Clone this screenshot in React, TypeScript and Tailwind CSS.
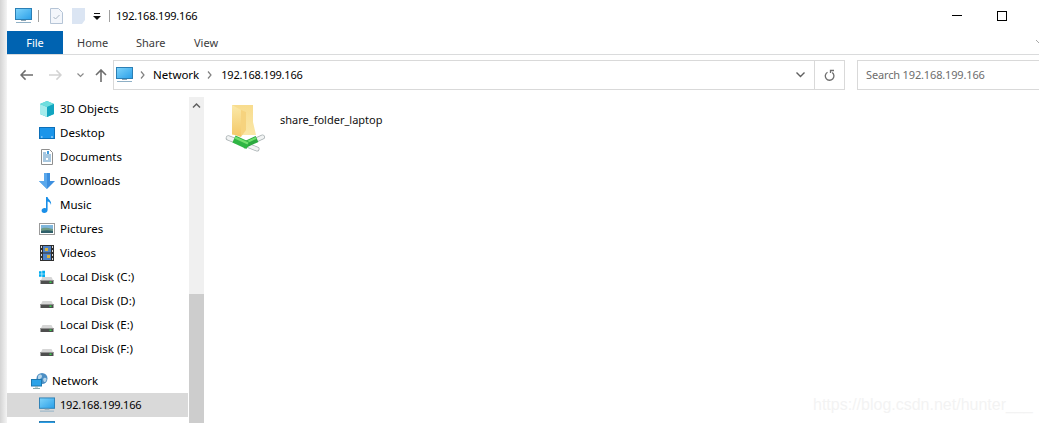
import React from "react";

const Monitor = ({ w = 17 }: { w?: number }) => (
  <svg width={w} height={16} viewBox="0 0 17 16" className="shrink-0">
    <defs>
      <linearGradient id="scr" x1="0" y1="0" x2="1" y2="1">
        <stop offset="0" stopColor="#7fd4fb" />
        <stop offset="1" stopColor="#2a9fe8" />
      </linearGradient>
    </defs>
    <rect x="0.5" y="0.5" width="16" height="11" fill="url(#scr)" stroke="#2b7fb5" />
    <rect x="6" y="12" width="5" height="1" fill="#8fa6b5" />
    <rect x="1" y="14" width="15" height="1" fill="#8fb0c6" />
  </svg>
);

const Cube = () => (
  <svg width="16" height="16" viewBox="0 0 16 16">
    <path d="M8 0l7 3v10l-7 3-7-3V3z" fill="#2fc4cf" />
    <path d="M1 3l7 3v10l-7-3z" fill="#a5ecec" />
    <path d="M8 0l7 3-7 3-7-3z" fill="#6fdede" />
    <path d="M8 6l7-3v10l-7 3z" fill="#12a5c0" />
  </svg>
);
const Desktop = () => (
  <svg width="16" height="16" viewBox="0 0 16 16">
    <rect x="0.5" y="2.5" width="15" height="11" fill="#1b95ea" stroke="#0d6fb8" />
    <rect x="2" y="11.5" width="1.500" height="1" fill="#cfeaff" />
    <rect x="12" y="11.5" width="2" height="1" fill="#cfeaff" />
  </svg>
);
const Docs = () => (
  <svg width="16" height="16" viewBox="0 0 16 16">
    <path d="M2.500 0.500h8l3 3v12h-11z" fill="#fff" stroke="#8f8f8f" />
    <path d="M4 4h3M4 6h8M4 8h8M4 10h3M9 10h3M4 12h8" stroke="#4f8fc0" strokeWidth="1" />
    <path d="M8 2h2v3H8z" fill="#3f9adb" />
  </svg>
);
const Download = () => (
  <svg width="16" height="16" viewBox="0 0 16 16">
    <path d="M5 0h6v8h5l-8 8-8-8h5z" fill="#3d8fdf" />
    <path d="M5 0h3v16l-8-8h5z" fill="#5aa8ec" />
  </svg>
);
const Music = () => (
  <svg width="16" height="16" viewBox="0 0 16 16">
    <path d="M7 0h1.600c.4 2.500 4.400 3.500 3.400 8-.4-2-2-3.200-3.400-3.400V13c0 1.800-1.600 3-3.400 3S2.600 15 2.600 13.500 4 11 5.500 11c.6 0 1.100.1 1.500.4z" fill="#1a8fe8" />
  </svg>
);
const Pictures = () => (
  <svg width="16" height="16" viewBox="0 0 16 16">
    <rect x="0.5" y="2.500" width="15" height="11" fill="#fff" stroke="#9a9a9a" />
    <rect x="2" y="4" width="12" height="4" fill="#7fb6dc" />
    <path d="M2 8c3-2 6-1 12 0v4H2z" fill="#6f9a84" />
    <path d="M2 10c4-1 8-1 12 0v2H2z" fill="#2f5f6a" />
  </svg>
);
const Videos = () => (
  <svg width="16" height="16" viewBox="0 0 16 16">
    <rect x="1" y="0" width="14" height="16" fill="#2f2f2f" />
    <rect x="4" y="1" width="8" height="6.500" fill="#4f83c8" />
    <rect x="4" y="8.500" width="8" height="6.500" fill="#4f83c8" />
    <path d="M6 3h3v3H6zM8 10h3v3H8z" fill="#d9b23c" />
    <path d="M2 1h1v2H2zM2 5h1v2H2zM2 9h1v2H2zM2 13h1v2H2zM13 1h1v2h-1zM13 5h1v2h-1zM13 9h1v2h-1zM13 13h1v2h-1z" fill="#ddd" />
  </svg>
);
const Disk = ({ win = false }: { win?: boolean }) => (
  <svg width="16" height="16" viewBox="0 0 16 16">
    {win && <path d="M0 2.300h2.600v2.500H0zM3.200 1.700H6v3H3.200zM0 5.300h2.600v2.500H0zM3.200 5.300H6v3H3.200z" fill="#00adef" />}
    <path d="M3.500 8h9l1.500 3H2z" fill="#d6d6d6" />
    <rect x="1.500" y="11" width="13" height="4" fill="#4e4e4e" />
    <rect x="1.500" y="11" width="13" height="1" fill="#909090" />
    <rect x="10.500" y="12.500" width="2" height="1.500" fill="#35d04a" />
  </svg>
);
const NetworkIcon = () => (
  <svg width="18" height="16" viewBox="0 0 18 16">
    <circle cx="11" cy="5.500" r="5.500" fill="#4d8fc4" />
    <path d="M8 2c2-1 3 0 3 1.500S9 5 9 7s-2 0-2-2 0-2.500 1-3zM13 5c1.500-.5 3 0 2.500 2S13 10 12.500 8s-.5-2.500.5-3z" fill="#b8d6ea" />
    <rect x="0.500" y="6.500" width="10" height="6.500" fill="#2aa3e8" stroke="#1c78b0" />
    <rect x="4" y="13.500" width="3" height="1" fill="#8aa" />
    <rect x="2" y="15" width="7" height="1" fill="#8aa" />
  </svg>
);

const FolderShare = () => (
  <svg width="44" height="56" viewBox="0 0 44 56" className="shrink-0">
    <defs>
      <linearGradient id="foldBack" x1="0" y1="0" x2="0" y2="1">
        <stop offset="0" stopColor="#f8dc8e" />
        <stop offset="1" stopColor="#fae7a8" />
      </linearGradient>
      <linearGradient id="foldFront" x1="0" y1="0" x2="0" y2="1">
        <stop offset="0" stopColor="#fbe9a9" />
        <stop offset="1" stopColor="#f3c766" />
      </linearGradient>
    </defs>
    <path d="M8 5H29V22L32 35H8z" fill="url(#foldBack)" />
    <path d="M8 5L17 10V37L8 34z" fill="url(#foldFront)" />
    <path d="M17 10L22 12V30L17 37z" fill="#f6d37e" />
    {/* pipe ends */}
    <line x1="4.500" y1="38" x2="11" y2="40.500" stroke="#aab2b4" strokeWidth="5.500" strokeLinecap="round" />
    <line x1="4.500" y1="38" x2="11" y2="40.500" stroke="#f1f3f3" strokeWidth="3.800" strokeLinecap="round" />
    <line x1="32" y1="40" x2="38.500" y2="37" stroke="#aab2b4" strokeWidth="5" strokeLinecap="round" />
    <line x1="32" y1="40" x2="38.500" y2="37" stroke="#f1f3f3" strokeWidth="3.400" strokeLinecap="round" />
    <line x1="24" y1="45.500" x2="33" y2="49" stroke="#aab2b4" strokeWidth="5" strokeLinecap="round" />
    <line x1="24" y1="45.500" x2="33" y2="49" stroke="#f1f3f3" strokeWidth="3.400" strokeLinecap="round" />
    {/* green pipes */}
    <line x1="19" y1="45.500" x2="33" y2="39" stroke="#2aa83e" strokeWidth="6.500" />
    <line x1="20" y1="43.500" x2="32" y2="38" stroke="#6fe06c" strokeWidth="2" />
    <line x1="10" y1="39" x2="24" y2="45.500" stroke="#2fb544" strokeWidth="7.500" />
    <line x1="11" y1="37.500" x2="24" y2="43.500" stroke="#74e070" strokeWidth="2.200" />
  </svg>
);

const rows: { label: string; icon: React.ReactNode }[] = [
  { label: "3D Objects", icon: <Cube /> },
  { label: "Desktop", icon: <Desktop /> },
  { label: "Documents", icon: <Docs /> },
  { label: "Downloads", icon: <Download /> },
  { label: "Music", icon: <Music /> },
  { label: "Pictures", icon: <Pictures /> },
  { label: "Videos", icon: <Videos /> },
  { label: "Local Disk (C:)", icon: <Disk win /> },
  { label: "Local Disk (D:)", icon: <Disk /> },
  { label: "Local Disk (E:)", icon: <Disk /> },
  { label: "Local Disk (F:)", icon: <Disk /> },
];

const Row = ({ label, icon }: { label: string; icon: React.ReactNode }) => (
  <div className="flex h-6 shrink-0 items-center pl-[32px]">
    <span className="flex w-4 justify-center">{icon}</span>
    <span className="ml-[5px] text-black">{label}</span>
  </div>
);

const Ip = "192.168.199.166";
const ipClass = "text-[11px] tracking-[-0.2px]";

export default function App() {
  return (
    <div className="relative flex h-[423px] w-[1039px] overflow-hidden bg-white text-[11.5px] leading-4 text-black [font-family:'Noto_Sans','Open_Sans',sans-serif]">
      <div className="w-[7px] shrink-0 bg-gradient-to-r from-[#d4d4d4] to-[#f4f4f4]" />
      <div className="flex min-w-0 flex-1 flex-col">
        {/* Title bar */}
        <div className="flex h-[31px] shrink-0 items-center">
          <span className="ml-[8px] flex"><Monitor /></span>
          <span className="ml-[6px] h-[12px] w-px bg-[#a0a0a0]" />
          <svg width="13" height="16" viewBox="0 0 13 16" className="ml-[11px]">
            <path d="M0.500 0.500h8l4 4v11H0.500z" fill="#f3f6fb" stroke="#b5c4d6" />
            <path d="M3.500 9l2 2 4-4" fill="none" stroke="#a9b6c4" />
          </svg>
          <svg width="13" height="16" viewBox="0 0 13 16" className="ml-[9px]">
            <path d="M0 0h13v12l-3 4H0z" fill="#dbe5f3" />
          </svg>
          <svg width="8" height="8" viewBox="0 0 8 8" className="ml-[8px] mt-[2px]">
            <path d="M1 0h6v1H1zM0 3h8L4 7z" fill="#111" />
          </svg>
          <span className="ml-[8px] h-[12px] w-px bg-[#a0a0a0]" />
          <span className={`ml-[6px] ${ipClass}`}>{Ip}</span>
          <span className="ml-auto h-px w-[10px] bg-black" />
          <span className="ml-[35px] mr-[32px] h-[10px] w-[10px] border border-black" />
        </div>
        {/* Ribbon */}
        <div className="flex h-6 shrink-0 items-stretch border-b border-[#dadbdc] text-[11px]">
          <div className="flex h-[23px] w-[56px] items-center justify-center bg-[#0063b1] text-white">File</div>
          <span className="ml-[14px] flex h-[23px] w-[59px] items-center text-[#3b3b3b]">Home</span>
          <span className="flex h-[23px] w-[58px] items-center text-[#3b3b3b]">Share</span>
          <span className="flex h-[23px] items-center text-[#3b3b3b]">View</span>
          <svg width="8" height="5" viewBox="0 0 8 5" className="ml-auto mt-[9px] mr-[-5px]">
            <path d="M0 0l4 4 4-4" fill="none" stroke="#a8a8a8" />
          </svg>
        </div>
        {/* Nav */}
        <div className="flex h-[42px] shrink-0 items-center pb-[2px]">
          <svg width="13" height="12" viewBox="0 0 14 12" className="ml-[13px]">
            <path d="M6 1L1 6l5 5M1 6h13" fill="none" stroke="#6d6d6d" strokeWidth="1.600" />
          </svg>
          <svg width="13" height="12" viewBox="0 0 14 12" className="ml-[16px]">
            <path d="M8 1l5 5-5 5M13 6H0" fill="none" stroke="#d2d2d2" strokeWidth="1.600" />
          </svg>
          <svg width="7" height="5" viewBox="0 0 7 5" className="ml-[15px]">
            <path d="M0.500 0.500L3.500 3.500 6.500 0.500" fill="none" stroke="#8a8a8a" strokeWidth="1.200" />
          </svg>
          <svg width="12" height="13" viewBox="0 0 12 13" className="ml-[11px]">
            <path d="M1 6l5-5 5 5M6 1v12" fill="none" stroke="#6d6d6d" strokeWidth="1.600" />
          </svg>
          <div className="ml-[6px] flex h-[30px] w-[732px] shrink-0 items-center border border-[#d9d9d9]">
            <span className="ml-[2px] flex"><Monitor /></span>
            <svg width="5" height="8" viewBox="0 0 5 8" className="ml-[7px]">
              <path d="M1 0.500L4 4 1 7.500" fill="none" stroke="#808080" strokeWidth="1.200" />
            </svg>
            <span className="ml-[8px]">Network</span>
            <svg width="5" height="8" viewBox="0 0 5 8" className="ml-[8px]">
              <path d="M1 0.500L4 4 1 7.500" fill="none" stroke="#808080" strokeWidth="1.200" />
            </svg>
            <span className={`ml-[9px] ${ipClass}`}>{Ip}</span>
            <svg width="9" height="6" viewBox="0 0 9 6" className="ml-auto mr-[9px]">
              <path d="M0.500 0.500L4.500 4.500 8.500 0.500" fill="none" stroke="#606060" strokeWidth="1.400" />
            </svg>
            <div className="flex h-full w-[30px] items-center justify-center border-l border-[#d9d9d9]">
              <svg width="11" height="12" viewBox="0 0 11 12">
                <path d="M7.500 3.200A4.300 4.300 0 1 1 2.800 3.500M1 1.500h3.500V4" fill="none" stroke="#6d6d6d" strokeWidth="1.300" transform="matrix(-1 0 0 1 11 0)" />
              </svg>
            </div>
          </div>
          <div className="ml-[12px] flex h-[30px] flex-1 items-center border border-r-0 border-[#d9d9d9] pl-[8px] text-[11px] tracking-[-0.15px] text-[#6d6d6d]">
            Search 192.168.199.166
          </div>
        </div>
        {/* Body */}
        <div className="flex min-h-0 flex-1">
          <div className="flex w-[182px] shrink-0 flex-col overflow-hidden">
            {rows.map((r) => (
              <Row key={r.label} label={r.label} icon={r.icon} />
            ))}
            <div className="mt-2 flex h-6 shrink-0 items-center pl-[24px]">
              <span className="flex w-[18px]"><NetworkIcon /></span>
              <span className="ml-[3px]">Network</span>
            </div>
            <div className="mr-px flex h-6 shrink-0 items-center bg-[#d9d9d9] pl-[32px]">
              <span className="flex w-4"><Monitor w={16} /></span>
              <span className={`ml-[5px] ${ipClass}`}>{Ip}</span>
            </div>
            <div className="flex h-6 shrink-0 items-start pl-[32px] pt-[4px]">
              <span className="h-3 w-4 border-x border-t border-[#2b7fb5] bg-[#2a9fe8]" />
            </div>
          </div>
          <div className="flex w-[15px] shrink-0 flex-col bg-[#f0f0f0]">
            <svg width="15" height="14" viewBox="0 0 15 14" className="mt-[4px] shrink-0">
              <path d="M4 6.500L7.500 3l3.500 3.500" fill="none" stroke="#606060" strokeWidth="1.500" />
            </svg>
            <div className="mt-[179px] flex-1 bg-[#cdcdcd]" />
          </div>
          <div className="flex flex-1 items-start pl-[20px] pt-[3px]">
            <FolderShare />
            <span className="ml-[12px] mt-[12px] text-[11px] text-[#111]">share_folder_laptop</span>
          </div>
        </div>
      </div>
      <span className="absolute left-[813px] top-[394px] text-[16px] leading-[22px] text-[#f3f3f3] [font-family:'Liberation_Sans',sans-serif]">
        https://blog.csdn.net/hunter___
      </span>
    </div>
  );
}
